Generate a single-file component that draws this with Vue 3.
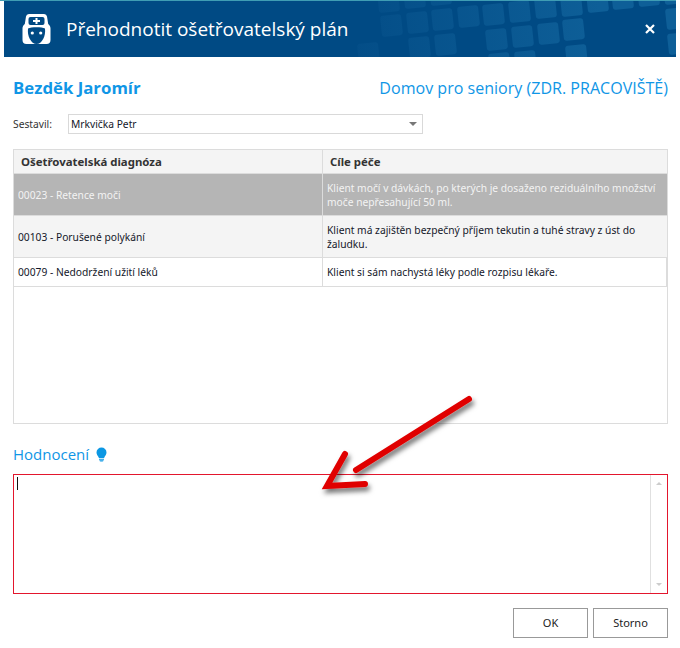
<script setup>
const rows = [
  { d: '00023 - Retence moči', c: 'Klient močí v dávkách, po kterých je dosaženo reziduálního množství moče nepřesahující 50 ml.', cls: 'sel' },
  { d: '00103 - Porušené polykání', c: 'Klient má zajištěn bezpečný příjem tekutin a tuhé stravy z úst do žaludku.', cls: 'alt' },
  { d: '00079 - Nedodržení užití léků', c: 'Klient si sám nachystá léky podle rozpisu lékaře.', cls: 'one' }
]
const tiles = [
  [378,-9,21,21],[404,-13,21,21],[430,-16,21,21],
  [381,15,21,21],[407,12,21,21],[432,9,21,21],[458,6,21,21],[483,4,21,21],[509,1,21,21],[535,-3,21,21],[561,-5,21,21],[587,-9,21,21],[612,-12,21,21],[638,-15,21,21],[664,-17,21,21],
  [486,29,21,21],[512,26,21,21],[538,23,21,21],[563,19,21,21],
  [409,37,21,21],[435,34,21,21],
  [666,8,21,21],[668,33,21,21],
  [566,45,21,21],[515,51,21,21],[489,53,21,21],[358,43,21,21]
]
</script>

<template>
  <div class="page">
    <header class="head">
      <svg class="tiles" viewBox="4 1 672 56" width="672" height="56" aria-hidden="true">
        <defs>
          <linearGradient id="tileFill" gradientUnits="userSpaceOnUse" x1="350" y1="0" x2="600" y2="0">
            <stop offset="0" stop-color="#034d87"/>
            <stop offset="1" stop-color="#0e5f98"/>
          </linearGradient>
        </defs>
        <rect
          v-for="(t, i) in tiles"
          :key="i"
          :x="t[0]"
          :y="t[1]"
          :width="t[2]"
          :height="t[3]"
          rx="3"
          fill="url(#tileFill)"
          :transform="`rotate(-6 ${t[0] + 10.500} ${t[1] + 10.500})`"
        />
      </svg>
      <svg class="nurse" width="29" height="30" viewBox="0 0 29 30" aria-hidden="true">
        <path fill="#fff" d="M7 0h15a3 3 0 0 1 3 2.500l1.200 7.500c1.500 1.200 2.300 2.700 2.300 4.500v11.500a4 4 0 0 1-4 4h-20a4 4 0 0 1-4-4V14.500c0-1.800.8-3.300 2.300-4.500L4 2.500A3 3 0 0 1 7 0z"/>
        <rect x="6.500" y="3" width="16" height="8" rx="2" fill="#004a84"/>
        <path fill="#fff" d="M13.500 4h2v2h2.500v2h-2.500v2h-2V8H11V6h2.500z"/>
        <path fill="#004a84" d="M6 14.500C9 12.800 20 12.800 23 14.500 24 22 20 30 14.500 30 9 30 5 22 6 14.500z"/>
        <circle cx="10.300" cy="19" r="1.600" fill="#fff"/>
        <circle cx="18.700" cy="19" r="1.600" fill="#fff"/>
      </svg>
      <h1 class="title">Přehodnotit ošetřovatelský plán</h1>
      <svg class="close" width="10" height="10" viewBox="0 0 10 10" aria-hidden="true">
        <path d="M1 1l8 8M9 1l-8 8" stroke="#fff" stroke-width="2.200" fill="none"/>
      </svg>
    </header>

    <main class="body">
      <div class="names">
        <div class="patient">Bezděk Jaromír</div>
        <div class="place">Domov pro seniory (ZDR. PRACOVIŠTĚ)</div>
      </div>

      <div class="author">
        <label class="author-label">Sestavil:</label>
        <div class="select">
          <span>Mrkvička Petr</span>
          <i class="caret"></i>
        </div>
      </div>

      <section class="grid">
        <div class="grid-head">
          <div class="col-a">Ošetřovatelská diagnóza</div>
          <div class="col-b">Cíle péče</div>
        </div>
        <div v-for="r in rows" :key="r.d" class="grid-row" :class="r.cls">
          <div class="col-a">{{ r.d }}</div>
          <div class="col-b">{{ r.c }}</div>
        </div>
      </section>

      <div class="eval-title">
        <span>Hodnocení</span>
        <svg width="11" height="15" viewBox="0 0 11 15" aria-hidden="true">
          <path fill="#0b97e3" d="M5.500.500a5 5 0 0 1 5 5c0 2-1.200 3-2 4.500-.2.400-.3.700-.3 1H2.800c0-.3-.1-.6-.3-1C1.700 8.500.5 7.500.5 5.500a5 5 0 0 1 5-5z"/>
          <path fill="#0b97e3" d="M3 11.700h5v1H3zM3.500 13.300h4v.6l-1 .7h-2l-1-.7z"/>
        </svg>
      </div>

      <div class="editor">
        <i class="cursor"></i>
        <div class="bar">
          <i class="up"></i>
          <i class="down"></i>
        </div>
      </div>

      <div class="actions">
        <button class="btn">OK</button>
        <button class="btn">Storno</button>
      </div>
    </main>

    <svg class="arrow" width="170" height="115" viewBox="310 385 170 115" aria-hidden="true">
      <defs>
        <filter id="sh" x="-20%" y="-20%" width="150%" height="150%">
          <feDropShadow dx="2" dy="4" stdDeviation="2.500" flood-color="#000" flood-opacity="0.55"/>
        </filter>
      </defs>
      <g filter="url(#sh)" fill="none" stroke="#e00000" stroke-linecap="round" stroke-linejoin="miter">
        <path d="M356 470L469 399" stroke-width="6"/>
        <path d="M345 454L327 486L365 484" stroke-width="6"/>
      </g>
    </svg>
  </div>
</template>

<style>
html, body { margin: 0; background: #fff; }
</style>

<style scoped>
.page {
  position: relative;
  width: 680px;
  height: 648px;
  overflow: hidden;
  background: #fff;
  font-family: "Noto Sans", "DejaVu Sans", sans-serif;
  color: #14182a;
}
.page::before {
  content: "";
  display: block;
  width: 676px;
  height: 1px;
  background: #3f9db4;
}
.head {
  position: relative;
  display: flex;
  align-items: center;
  height: 56px;
  margin: 0 4px;
  background: #004a84;
  overflow: hidden;
}
.tiles { position: absolute; inset: 0; }
.nurse { position: relative; margin-left: 18px; }
.title {
  position: relative;
  margin: 0 0 0 15px;
  flex: 1;
  font: 400 19px/28px "Open Sans", sans-serif;
  color: #fff;
}
.close { position: relative; margin-right: 21px; }
.body { padding: 0 12px 0 13px; }
.names {
  display: flex;
  justify-content: space-between;
  align-items: baseline;
  margin-top: 19px;
  height: 24px;
}
.patient {
  font: 700 16.800px/24px "Open Sans", sans-serif;
  color: #1096e6;
}
.place {
  font: 400 16.060px/24px "Open Sans", sans-serif;
  color: #1096e6;
}
.author {
  display: flex;
  align-items: center;
  margin-top: 14px;
  height: 20px;
  font-size: 10.250px;
}
.author-label { width: 55px; color: #333; }
.select {
  box-sizing: border-box;
  display: flex;
  align-items: center;
  justify-content: space-between;
  width: 355px;
  height: 20px;
  padding: 0 5px 0 2px;
  border: 1px solid #d9d9d9;
}
.caret {
  border-left: 4px solid transparent;
  border-right: 4px solid transparent;
  border-top: 4px solid #777;
}
.grid {
  box-sizing: border-box;
  width: 655px;
  height: 275px;
  margin-top: 15px;
  border: 1px solid #dcdcdc;
  font-size: 10.250px;
  line-height: 14px;
}
.grid-head, .grid-row {
  display: grid;
  grid-template-columns: 309px 1fr;
  box-sizing: border-box;
  border-bottom: 1px solid #dcdcdc;
}
.grid-head {
  height: 24px;
  background: #f4f4f4;
  font-size: 11.400px;
  font-weight: 700;
  color: #333;
}
.grid-head .col-a, .grid-head .col-b { height: 100%; display: flex; align-items: center; box-sizing: border-box; }
.grid-head .col-a { padding-left: 7px; border-right: 1px solid #dcdcdc; }
.grid-head .col-b { padding-left: 7px; }
.grid-row .col-a, .grid-row .col-b { display: flex; align-items: center; box-sizing: border-box; }
.grid-row .col-a { padding-left: 4px; border-right: 1px solid #dcdcdc; }
.grid-row .col-b { padding-left: 4px; padding-right: 4px; }
.sel { height: 42px; background: #b5b5b5; color: #f3f3f3; }
.alt { height: 42px; background: #f4f4f4; }
.one { height: 29px; background: #fff; border-right: 1px solid #dcdcdc; }
.eval-title {
  display: flex;
  align-items: center;
  gap: 7px;
  height: 24px;
  margin-top: 18px;
  font: 400 15px/24px "Open Sans", sans-serif;
  color: #1096e6;
}
.editor {
  position: relative;
  box-sizing: border-box;
  width: 655px;
  height: 120px;
  margin-top: 8px;
  border: 1px solid #e3162d;
}
.cursor {
  position: absolute;
  left: 3px;
  top: 2px;
  width: 1px;
  height: 13px;
  background: #111;
}
.bar {
  position: absolute;
  right: 0;
  top: 0;
  bottom: 0;
  width: 16px;
  border-left: 1px solid #e0e0e0;
}
.up, .down {
  position: absolute;
  left: 5px;
  border-left: 3px solid transparent;
  border-right: 3px solid transparent;
}
.up { top: 7px; border-bottom: 3px solid #ccc; }
.down { bottom: 7px; border-top: 3px solid #ccc; }
.actions {
  display: flex;
  justify-content: flex-end;
  gap: 5px;
  margin-top: 14px;
  width: 655px;
}
.btn {
  box-sizing: border-box;
  width: 75px;
  height: 30px;
  padding: 0 0 2px;
  background: #fff;
  border: 1px solid #999;
  font: 400 11px "Noto Sans", sans-serif;
  color: #222;
}
.arrow { position: absolute; left: 310px; top: 385px; pointer-events: none; }
</style>
